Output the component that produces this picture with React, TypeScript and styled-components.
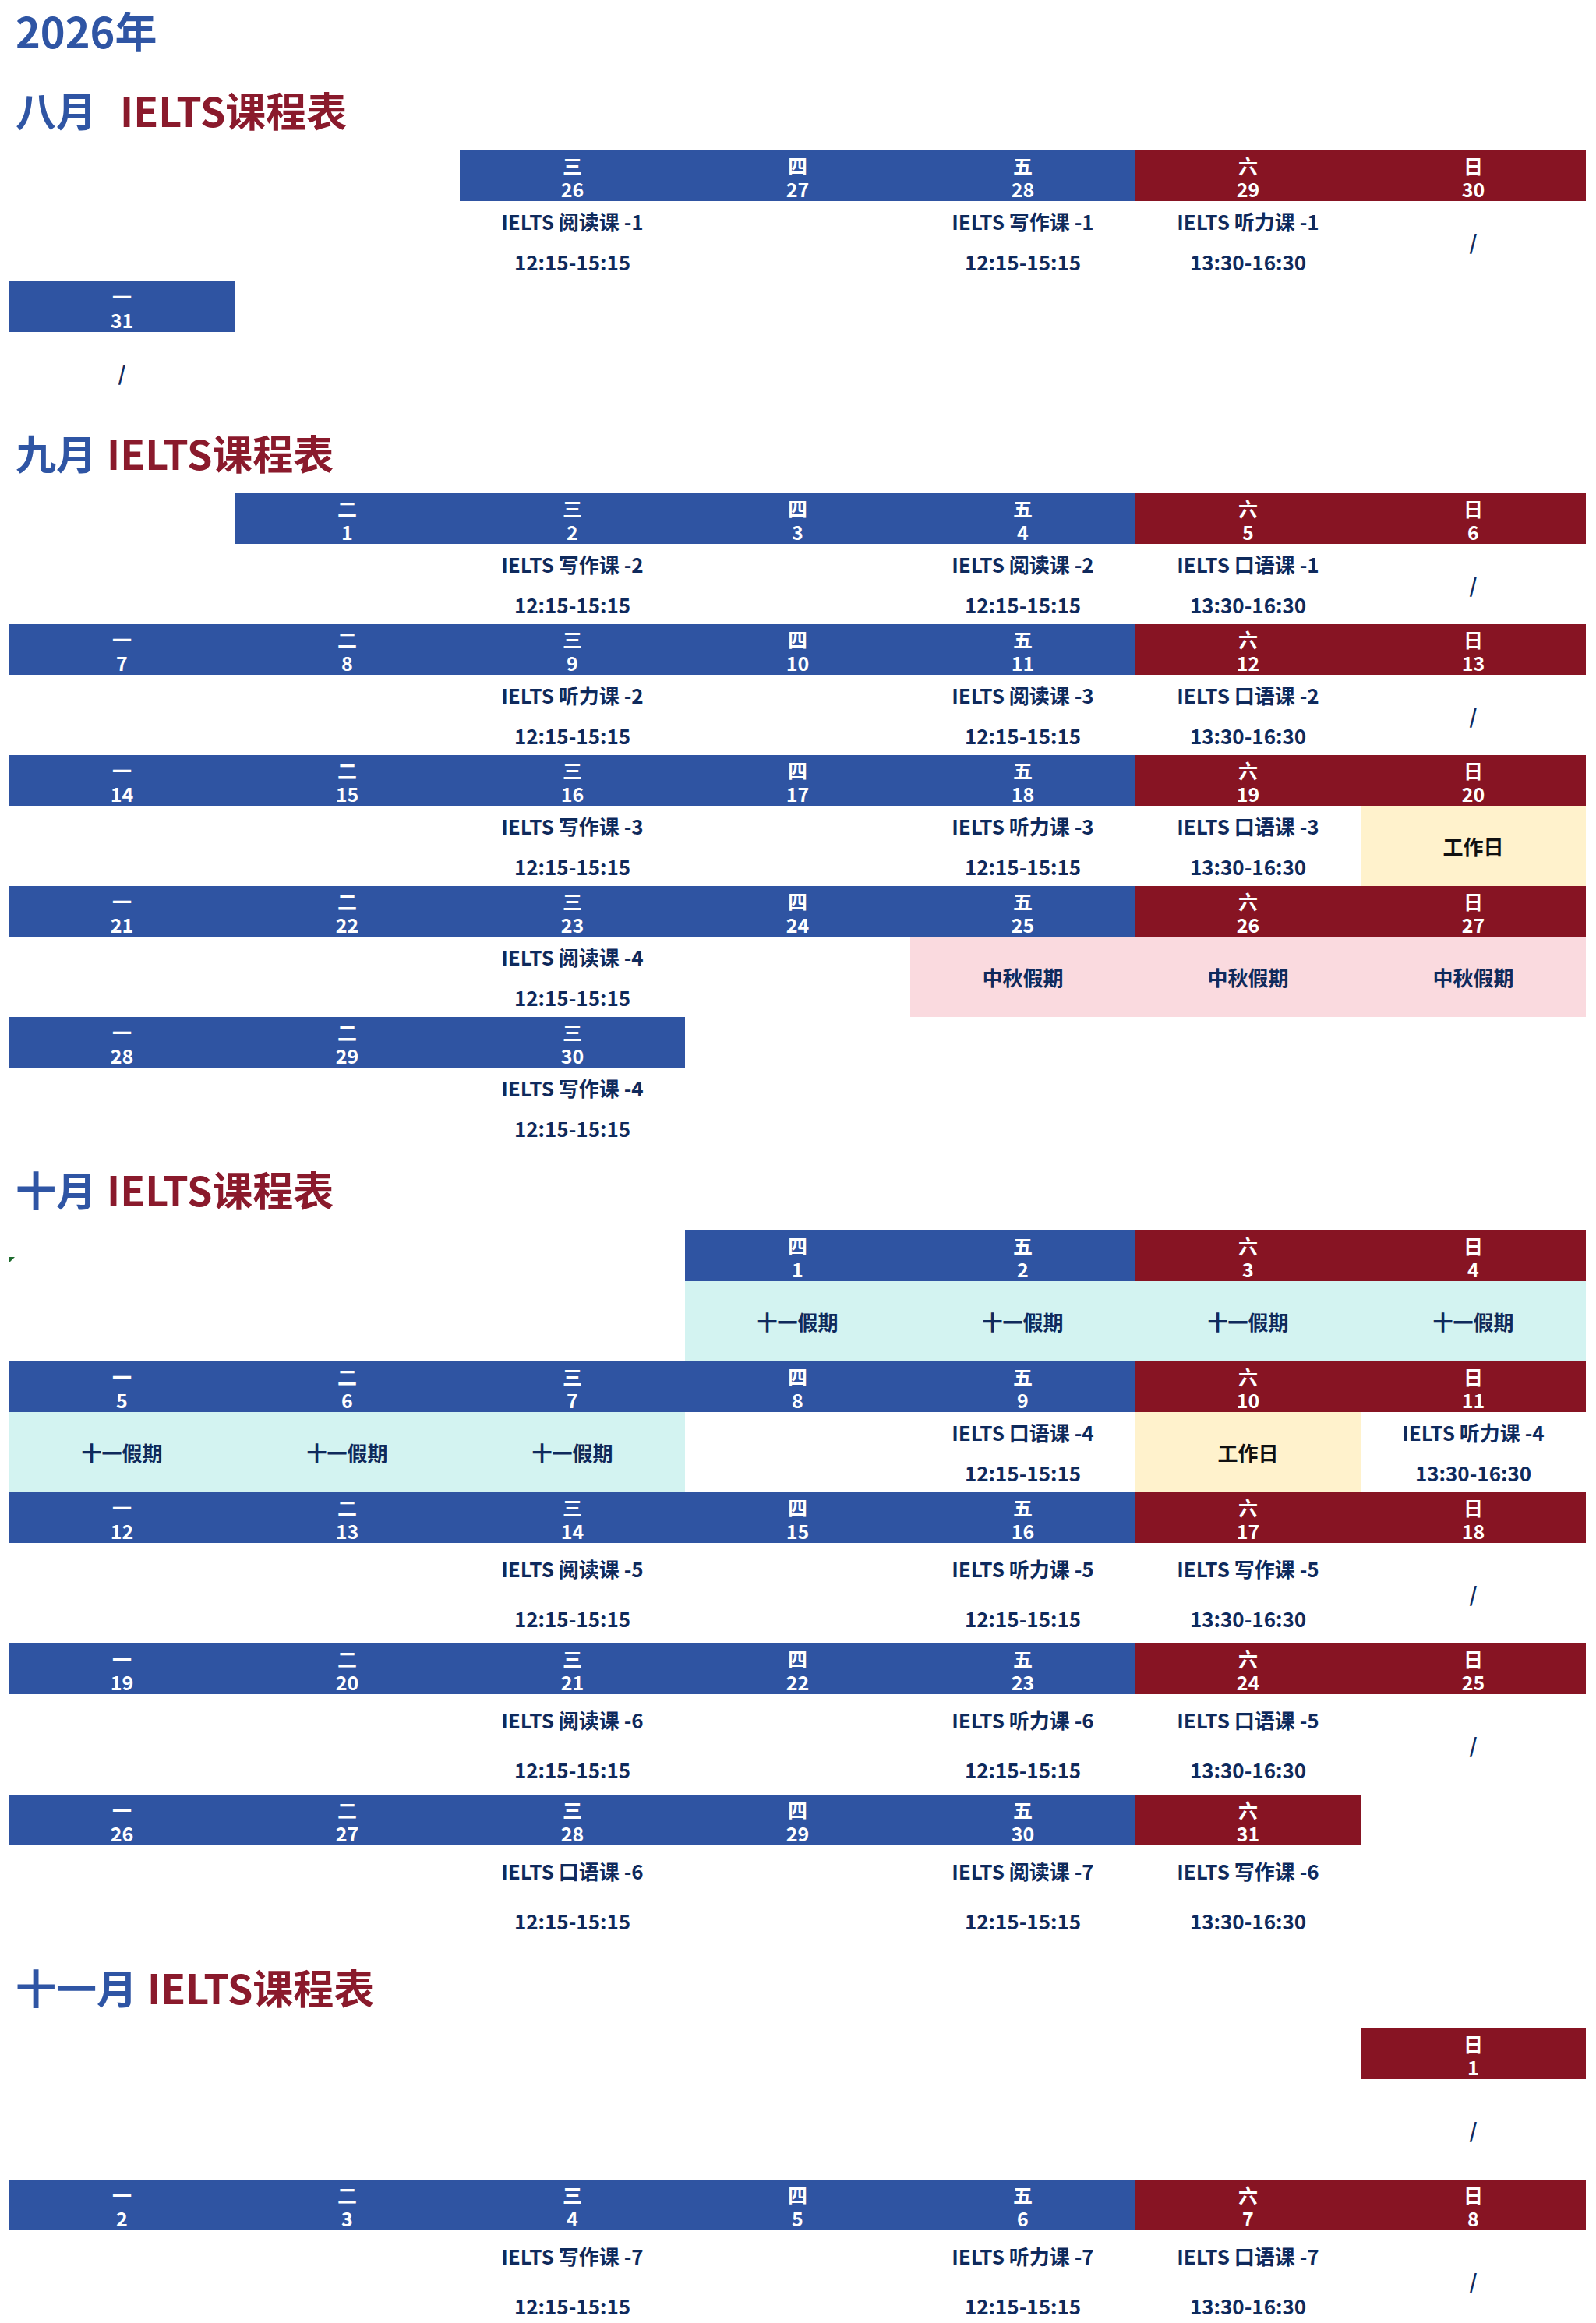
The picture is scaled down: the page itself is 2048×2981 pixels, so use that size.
import styled, { createGlobalStyle } from 'styled-components'

const GlobalStyle = createGlobalStyle`
  html, body { margin: 0; padding: 0; background: #fff; }
  body { font-family: 'Noto Sans CJK SC', 'Noto Sans', sans-serif; }
`

const colors = {
  blue: '#2F54A2',
  red: '#871423',
  navy: '#0F2A5C',
  titleBlue: '#2F55A4',
  titleRed: '#8A1A2C',
  yellow: '#FFF2CC',
  pink: '#FADADF',
  cyan: '#D3F3F1',
}

const Page = styled.div`
  width: 2048px;
  padding-left: 12px;
  box-sizing: border-box;
`

const Year = styled.h1`
  margin: 0;
  height: 89px;
  padding-left: 8px;
  font-size: 54px;
  line-height: 78px;
  font-weight: 700;
  color: ${colors.titleBlue};
`

const MonthTitle = styled.h2<{ $h: number }>`
  margin: 0;
  height: ${({ $h }) => $h}px;
  line-height: ${({ $h }) => $h}px;
  padding-left: 8px;
  font-size: 52px;
  font-weight: 700;
  white-space: pre;
  color: ${colors.titleBlue};
`

const TitleRed = styled.span<{ $gap: number }>`
  margin-left: ${({ $gap }) => $gap}px;
  color: ${colors.titleRed};
`

const Row = styled.div`
  display: grid;
  grid-template-columns: repeat(7, 289px);
`

type Tone = 'blue' | 'red' | 'none'

const HeadCell = styled.div<{ $tone: Tone }>`
  position: relative;
  height: 65px;
  padding-top: 4px;
  box-sizing: border-box;
  display: flex;
  flex-direction: column;
  align-items: center;
  background: ${({ $tone }) => ($tone === 'none' ? 'transparent' : colors[$tone])};
  color: #fff;
  font-size: 25px;
  font-weight: 700;
  line-height: 30px;
`

const ErrorMark = styled.i`
  position: absolute;
  top: 34px;
  left: 0;
  width: 0;
  height: 0;
  border-top: 7px solid #1E6B2E;
  border-right: 7px solid transparent;
`

type Fill = 'yellow' | 'pink' | 'cyan'

const BodyRow = styled(Row)<{ $h: number }>`
  height: ${({ $h }) => $h}px;
`

const BodyCell = styled.div`
  display: grid;
  grid-template-rows: 1fr 1fr;
  align-items: center;
  justify-items: center;
  color: ${colors.navy};
  font-size: 26px;
  font-weight: 700;
  white-space: pre;
`

const Centered = styled.div<{ $fill?: Fill }>`
  display: flex;
  align-items: center;
  justify-content: center;
  background: ${({ $fill }) => ($fill ? colors[$fill] : 'transparent')};
  color: ${({ $fill }) => ($fill === 'yellow' ? '#111' : colors.navy)};
  font-size: 26px;
  font-weight: 700;
`

type Body =
  | { kind: 'lesson'; name: string; time: string }
  | { kind: 'slash' }
  | { kind: 'fill'; tone: Fill; text: string }

type Week = {
  start: number
  first: number
  count: number
  h: number
  body: Record<number, Body>
  mark?: boolean
}

type Month = { label: string; gap: number; h: number; weeks: Week[] }

const WD = ['一', '二', '三', '四', '五', '六', '日']
const AM = '12:15-15:15'
const PM = '13:30-16:30'

const L = (name: string, time = AM): Body => ({ kind: 'lesson', name: `IELTS ${name}`, time })
const S: Body = { kind: 'slash' }
const F = (tone: Fill, text: string): Body => ({ kind: 'fill', tone, text })
const work = F('yellow', '工作日')
const midAutumn = F('pink', '中秋假期')
const national = F('cyan', '十一假期')

const months: Month[] = [
  {
    label: '八月',
    gap: 30,
    h: 104,
    weeks: [
      { start: 2, first: 26, count: 5, h: 103, body: { 2: L('阅读课 -1'), 4: L('写作课 -1'), 5: L('听力课 -1', PM), 6: S } },
      { start: 0, first: 31, count: 1, h: 103, body: { 0: S } },
    ],
  },
  {
    label: '九月',
    gap: 13,
    h: 104,
    weeks: [
      { start: 1, first: 1, count: 6, h: 103, body: { 2: L('写作课 -2'), 4: L('阅读课 -2'), 5: L('口语课 -1', PM), 6: S } },
      { start: 0, first: 7, count: 7, h: 103, body: { 2: L('听力课 -2'), 4: L('阅读课 -3'), 5: L('口语课 -2', PM), 6: S } },
      { start: 0, first: 14, count: 7, h: 103, body: { 2: L('写作课 -3'), 4: L('听力课 -3'), 5: L('口语课 -3', PM), 6: work } },
      { start: 0, first: 21, count: 7, h: 103, body: { 2: L('阅读课 -4'), 4: midAutumn, 5: midAutumn, 6: midAutumn } },
      { start: 0, first: 28, count: 3, h: 103, body: { 2: L('写作课 -4') } },
    ],
  },
  {
    label: '十月',
    gap: 13,
    h: 106,
    weeks: [
      { start: 3, first: 1, count: 4, h: 103, mark: true, body: { 3: national, 4: national, 5: national, 6: national } },
      { start: 0, first: 5, count: 7, h: 103, body: { 0: national, 1: national, 2: national, 4: L('口语课 -4'), 5: work, 6: L('听力课 -4', PM) } },
      { start: 0, first: 12, count: 7, h: 129, body: { 2: L('阅读课 -5'), 4: L('听力课 -5'), 5: L('写作课 -5', PM), 6: S } },
      { start: 0, first: 19, count: 7, h: 129, body: { 2: L('阅读课 -6'), 4: L('听力课 -6'), 5: L('口语课 -5', PM), 6: S } },
      { start: 0, first: 26, count: 6, h: 129, body: { 2: L('口语课 -6'), 4: L('阅读课 -7'), 5: L('写作课 -6', PM) } },
    ],
  },
  {
    label: '十一月',
    gap: 13,
    h: 106,
    weeks: [
      { start: 6, first: 1, count: 1, h: 129, body: { 6: S } },
      { start: 0, first: 2, count: 7, h: 129, body: { 2: L('写作课 -7'), 4: L('听力课 -7'), 5: L('口语课 -7', PM), 6: S } },
    ],
  },
]

function BodyContent({ body }: { body?: Body }) {
  if (!body) return <div />
  if (body.kind === 'slash') return <Centered>/</Centered>
  if (body.kind === 'fill') return <Centered $fill={body.tone}>{body.text}</Centered>
  return (
    <BodyCell>
      <div>{body.name}</div>
      <div>{body.time}</div>
    </BodyCell>
  )
}

function WeekBlock({ week }: { week: Week }) {
  const cols = WD.map((_, i) => i)
  const inWeek = (i: number) => i >= week.start && i < week.start + week.count
  return (
    <>
      <Row>
        {cols.map((i) => {
          const tone: Tone = !inWeek(i) ? 'none' : i >= 5 ? 'red' : 'blue'
          return (
            <HeadCell key={i} $tone={tone}>
              {inWeek(i) && (
                <>
                  <div>{WD[i]}</div>
                  <div>{week.first + i - week.start}</div>
                </>
              )}
              {week.mark && i === 0 && <ErrorMark />}
            </HeadCell>
          )
        })}
      </Row>
      <BodyRow $h={week.h}>
        {cols.map((i) => (
          <BodyContent key={i} body={week.body[i]} />
        ))}
      </BodyRow>
    </>
  )
}

export default function App() {
  return (
    <>
      <GlobalStyle />
      <Page>
        <Year>2026年</Year>
        {months.map((m) => (
          <section key={m.label}>
            <MonthTitle $h={m.h}>
              {m.label}
              <TitleRed $gap={m.gap}>IELTS课程表</TitleRed>
            </MonthTitle>
            {m.weeks.map((w) => (
              <WeekBlock key={w.first} week={w} />
            ))}
          </section>
        ))}
      </Page>
    </>
  )
}
